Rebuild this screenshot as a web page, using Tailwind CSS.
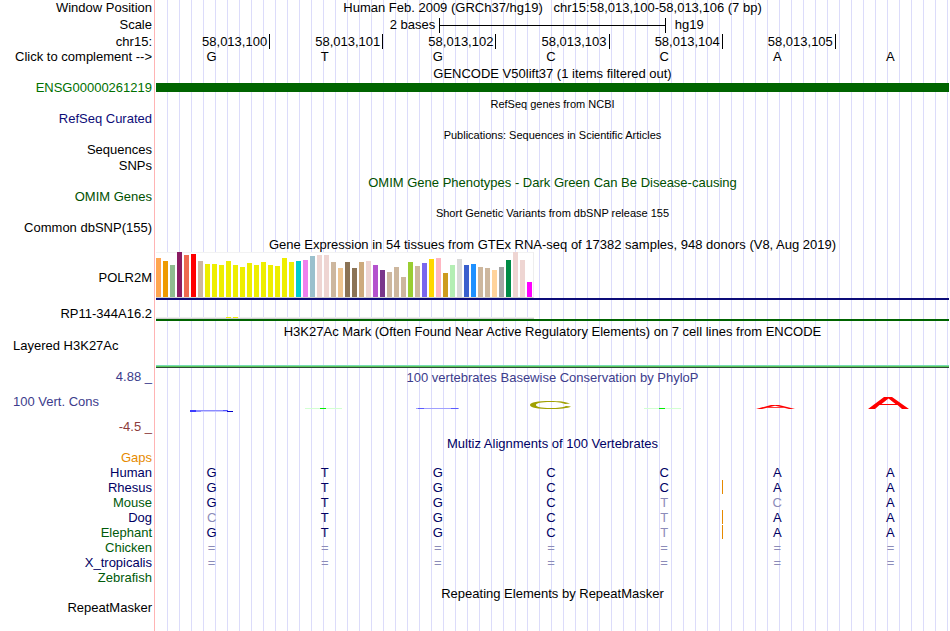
<!DOCTYPE html>
<html lang="en">
<head>
  <meta charset="UTF-8">
  <meta name="viewport" content="width=device-width, initial-scale=1.0">
  <title>Human chr15:58,013,100-58,013,106</title>
  <script src="https://cdn.jsdelivr.net/npm/@tailwindcss/browser@4"></script>
</head>
<body class="bg-white font-['Liberation_Sans',Arial,sans-serif] text-[13px] leading-[14px] text-black">
  <main class="relative mr-px min-h-screen">
    <!-- guide lines behind all of the tracks -->
    <div class="absolute inset-y-0 left-[154px] right-0 border-l border-[#ffb4b4] pl-px">
      <div class="h-full bg-[linear-gradient(to_right,transparent_11px,#dcdcfa_11px)] bg-[size:12px_12px]"></div>
    </div>

    <div class="relative">
      <!-- position, scale and ruler -->
      <div class="flex h-4 items-center">
        <div class="w-[156px] shrink-0 pr-1 text-right leading-4">Window Position</div>
        <h1 class="flex-1 whitespace-pre text-center">Human Feb. 2009 (GRCh37/hg19)   chr15:58,013,100-58,013,106 (7 bp)</h1>
      </div>
      <div class="flex h-[18px] items-center">
        <div class="w-[156px] shrink-0 pr-1 text-right leading-4">Scale</div>
        <div class="grid flex-1 grid-cols-[5fr_4fr_5fr] items-center">
          <span class="pr-1 text-right">2 bases</span>
          <div class="flex h-[15px] items-center border-x border-black"><div class="h-px w-full bg-black"></div></div>
          <span class="pl-[9px]">hg19</span>
        </div>
      </div>
      <div class="flex h-[15px] items-center">
        <div class="w-[156px] shrink-0 pr-1 text-right leading-4">chr15:</div>
        <div id="ruler" class="grid flex-1 grid-cols-7 pl-px"></div>
      </div>
      <div class="flex h-4 items-center">
        <div class="w-[156px] shrink-0 pr-1 text-right leading-4">Click to complement --&gt;</div>
        <div id="bases" class="grid flex-1 grid-cols-7 pl-px text-center"></div>
      </div>

      <!-- GENCODE -->
      <h2 class="ml-[156px] h-4 text-center leading-[18px]">GENCODE V50lift37 (1 items filtered out)</h2>
      <div class="flex h-[14px]">
        <div class="w-[156px] shrink-0 pr-1 text-right text-[#007000]">ENSG00000261219</div>
        <div class="mt-[2px] h-[9px] flex-1 bg-[#006400]"></div>
      </div>

      <h2 class="ml-[156px] h-[17px] text-center text-[11px] leading-[19px]">RefSeq genes from NCBI</h2>
      <div class="h-[14px] w-[156px] pr-1 text-right text-[#0c0c78]">RefSeq Curated</div>

      <h2 class="ml-[156px] h-[17px] text-center text-[11px] leading-[19px]">Publications: Sequences in Scientific Articles</h2>
      <div class="h-[14px] w-[156px] pr-1 text-right">Sequences</div>
      <div class="h-4 w-[156px] pr-1 text-right leading-[18px]">SNPs</div>

      <h2 class="ml-[156px] h-[17px] text-center leading-[19px] text-[#005000]">OMIM Gene Phenotypes - Dark Green Can Be Disease-causing</h2>
      <div class="h-[14px] w-[156px] pr-1 text-right text-[#005000]">OMIM Genes</div>

      <h2 class="ml-[156px] h-[17px] text-center text-[11px] leading-[19px]">Short Genetic Variants from dbSNP release 155</h2>
      <div class="h-[14px] w-[156px] pr-1 text-right">Common dbSNP(155)</div>

      <!-- GTEx -->
      <h2 class="ml-[156px] h-[17px] text-center leading-[19px]">Gene Expression in 54 tissues from GTEx RNA-seq of 17382 samples, 948 donors (V8, Aug 2019)</h2>
      <div class="flex h-[50px]">
        <div class="w-[156px] shrink-0 pr-1 text-right leading-[52px]">POLR2M</div>
        <div class="flex-1">
          <div id="gtex" class="flex h-[46px] w-[378px] items-end gap-[2px] border-r border-b border-r-[#eeeeee] border-b-[#cccccc] bg-white shadow-[inset_0_1px_#f2f2f2]"></div>
          <div class="h-[2px] bg-[#0c0c78]"></div>
        </div>
      </div>
      <div class="flex h-[21px]">
        <div class="w-[156px] shrink-0 pr-1 text-right leading-[23px]">RP11-344A16.2</div>
        <div class="flex-1 pt-[15px]">
          <div class="flex h-[2px] w-[378px] gap-[2px] border-b border-[#cccccc] bg-[#eeeeee] pl-[70px]">
            <div class="w-[5px] bg-[#eeee00]"></div>
            <div class="w-[5px] bg-[#eeee00]"></div>
          </div>
          <div class="h-[2px] bg-[#006400]"></div>
        </div>
      </div>

      <!-- H3K27Ac -->
      <h2 class="ml-[156px] h-[17px] text-center leading-[17px]">H3K27Ac Mark (Often Found Near Active Regulatory Elements) on 7 cell lines from ENCODE</h2>
      <div class="flex h-7">
        <div class="w-[156px] shrink-0 pl-[13px] leading-3">Layered H3K27Ac</div>
        <div class="flex flex-1 flex-col justify-end">
          <div class="h-px bg-[#78dcb4]"></div>
          <div class="h-px bg-[#5ac85a]"></div>
          <div class="h-px bg-[#2d4b37]"></div>
        </div>
      </div>

      <!-- PhyloP -->
      <div class="flex h-[17px] text-[#3c3c8c]">
        <div class="w-[156px] shrink-0 pr-1 text-right leading-[17px]">4.88 _</div>
        <h2 class="flex-1 text-center leading-[19px]">100 vertebrates Basewise Conservation by PhyloP</h2>
      </div>
      <div class="flex h-[33px]">
        <div class="w-[156px] shrink-0 pl-[13px] leading-[33px] text-[#3c3c8c]">100 Vert. Cons</div>
        <div class="grid flex-1 grid-cols-7 justify-items-center pt-3 pl-px *:mr-[6px] *:h-4 *:w-11">
          <svg viewBox="0 0 44 16" fill="none">
            <path d="M1 14H7" stroke="#3c3cff" stroke-width="2"/>
            <path d="M7 14H12" stroke="#8c8cff" stroke-width="2"/>
            <path d="M12 13.5H39" stroke="#8c8cff"/>
            <path d="M12 14.5H39" stroke="#c8c8ff"/>
            <path d="M34 13.5H39" stroke="#5050ff"/>
            <path d="M38 14.5H44" stroke="#0000c8"/>
          </svg>
          <svg viewBox="0 0 44 16" fill="none">
            <path d="M3 11.5H40" stroke="#d2ffd2"/>
            <path d="M18 11.5H24" stroke="#00f000"/>
          </svg>
          <svg viewBox="0 0 44 16" fill="none">
            <path d="M1 11.5H44" stroke="#a0a0ff"/>
            <path d="M3 11.5H9M36 11.5H43" stroke="#5a5aff"/>
          </svg>
          <svg viewBox="0 0 44 16" fill="#a0a000">
            <path d="M42 6.6C38 4.800 31 4 22 4C10 4 2 5.400 2 8C2 10.600 10 12 22 12C32 12 40 11.200 43 9.400L38 9C35 10.400 30 11 22.500 11C13 11 8 10 8 8C8 6 13 5 22.500 5C30 5 34 5.700 37 7Z"/>
          </svg>
          <svg viewBox="0 0 44 16" fill="none">
            <path d="M3 11.5H40" stroke="#d2ffd2"/>
            <path d="M18 11.5H24" stroke="#00f000"/>
          </svg>
          <svg viewBox="0 0 44 16" fill="#ff0000">
            <path fill-rule="evenodd" d="M2 12L17 8H25L41 12H35L30 10.700H13L8 12ZM16 10H27L21 8.700Z"/>
          </svg>
          <svg viewBox="0 0 44 16" fill="#ff0000">
            <path fill-rule="evenodd" d="M1 12L17 0H25L42 12H35L30.500 8H12.500L8 12ZM14.500 7H28.500L21.500 1.600Z"/>
          </svg>
        </div>
      </div>
      <div class="h-[17px] w-[156px] pr-1 text-right leading-[17px] text-[#8c3c3c]">-4.5 _</div>

      <!-- Multiz -->
      <h2 class="ml-[156px] h-[15px] text-center leading-[17px] text-[#000064]">Multiz Alignments of 100 Vertebrates</h2>
      <table class="w-full table-fixed border-separate border-spacing-0 leading-[15px]">
        <colgroup><col class="w-[157px]"><col span="7"></colgroup>
        <tbody id="multiz"></tbody>
      </table>

      <!-- RepeatMasker -->
      <h2 class="ml-[156px] h-4 text-center leading-[18px]">Repeating Elements by RepeatMasker</h2>
      <div class="h-[14px] w-[156px] pr-1 text-right">RepeatMasker</div>
    </div>
  </main>

  <script>
    // ruler ticks, the last column has none
    const positions = ["58,013,100", "58,013,101", "58,013,102", "58,013,103", "58,013,104", "58,013,105"];
    document.getElementById("ruler").innerHTML = positions
      .map(p => `<span class="border-r border-black pt-px pr-[2px] text-right">${p}</span>`)
      .join("");

    document.getElementById("bases").innerHTML = [..."GTGCCAA"]
      .map(b => `<span class="pr-1">${b}</span>`)
      .join("");

    // tissue colour and bar height
    const tissues = [
      ["#ffa54f", 39], ["#ee9a00", 36], ["#8fbc8f", 32], ["#8b1c62", 45], ["#ee6a50", 42], ["#ff0000", 43],
      ["#cdb79e", 36], ["#eeee00", 33], ["#eeee00", 33], ["#eeee00", 32], ["#eeee00", 36], ["#eeee00", 32],
      ["#eeee00", 30], ["#eeee00", 34], ["#eeee00", 32], ["#eeee00", 35], ["#eeee00", 32], ["#eeee00", 31],
      ["#eeee00", 39], ["#eeee00", 35], ["#00cdcd", 36], ["#ee82ee", 37], ["#9ac0cd", 41], ["#eed5d2", 42],
      ["#eed5d2", 42], ["#cdb79e", 35], ["#eec591", 29], ["#8b7355", 35], ["#8b7355", 29], ["#cdaa7d", 35],
      ["#eed5d2", 36], ["#b452cd", 32], ["#7a378b", 27], ["#cdb79e", 25], ["#cdb79e", 30], ["#cdb79e", 20],
      ["#9acd32", 35], ["#cdb79e", 31], ["#7a67ee", 34], ["#ffd700", 38], ["#ffb6c1", 39], ["#cd9b1d", 24],
      ["#b4eeb4", 32], ["#d9d9d9", 38], ["#3a5fcd", 32], ["#1e90ff", 33], ["#cdb79e", 30], ["#cdb79e", 29],
      ["#ffd39b", 27], ["#a6a6a6", 30], ["#008b45", 37], ["#eed5d2", 45], ["#eed5d2", 37], ["#ff00ff", 15],
    ];
    document.getElementById("gtex").innerHTML = tissues
      .map(([color, height]) => `<div class="w-[5px] shrink-0" style="height:${height}px;background:${color}"></div>`)
      .join("");

    // lower case is a mismatch, | is an insert after the base
    const navy = "text-[#000064]";
    const green = "text-[#005a0a]";
    const species = [
      ["Gaps", "text-[#e68a00]", []],
      ["Human", navy, ["G", "T", "G", "C", "C", "A", "A"]],
      ["Rhesus", navy, ["G", "T", "G", "C", "C|", "A", "A"]],
      ["Mouse", green, ["G", "T", "G", "C", "t", "c", "A"]],
      ["Dog", navy, ["c", "T", "G", "C", "t|", "A", "A"]],
      ["Elephant", green, ["G", "T", "G", "C", "t|", "A", "A"]],
      ["Chicken", green, ["=", "=", "=", "=", "=", "=", "="]],
      ["X_tropicalis", navy, ["=", "=", "=", "=", "=", "=", "="]],
      ["Zebrafish", green, []],
    ];
    function baseCell(cell) {
      const base = cell[0];
      const color = base === base.toUpperCase() && base !== "=" ? "text-[#000064]" : "text-[#8c8cb9]";
      const border = cell.endsWith("|") ? "border-[#e68a00]" : "border-transparent";
      return `<td class="p-0 ${color}"><div class="mb-px h-[14px] border-r pr-[3px] text-center ${border}">${base.toUpperCase()}</div></td>`;
    }
    document.getElementById("multiz").innerHTML = species
      .map(([name, color, cells]) => `<tr><th scope="row" class="p-0 pr-[5px] text-right font-normal ${color}">${name}</th>${cells.map(baseCell).join("")}</tr>`)
      .join("");
  </script>
</body>
</html>
